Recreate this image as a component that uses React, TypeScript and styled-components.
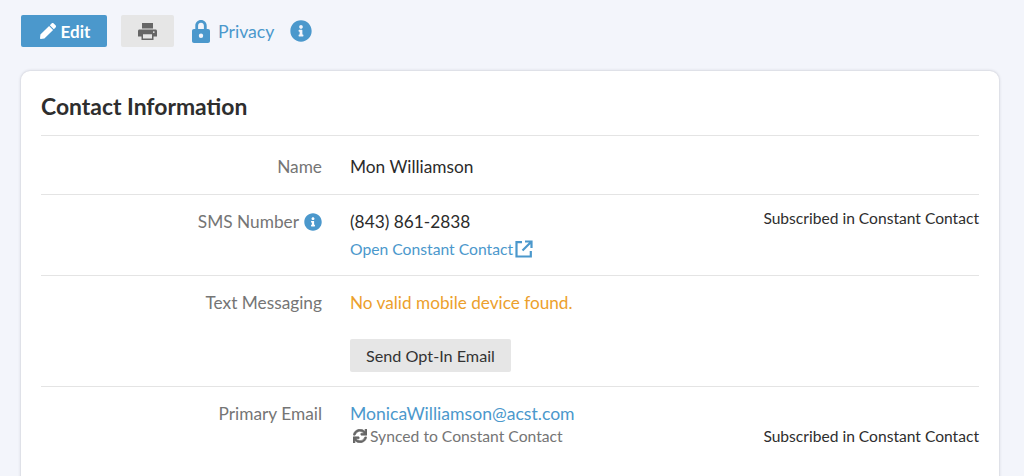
import React from "react";
import styled, { createGlobalStyle } from "styled-components";
import { FaPen, FaInfoCircle, FaSync } from "react-icons/fa";

const Global = createGlobalStyle`
  html, body { margin: 0; padding: 0; height: 100%; overflow: hidden; background: #f3f5fb; }
  body { font-family: Lato, "Liberation Sans", sans-serif; color: #2b2b2b; }
`;

const Page = styled.div`
  padding: 15px 25px 0 21px;
  display: flex;
  flex-direction: column;
  gap: 24px;
`;
const Toolbar = styled.div`
  display: flex;
  align-items: center;
  height: 32px;
`;
const Button = styled.button<{ $primary?: boolean }>`
  display: inline-flex;
  align-items: center;
  justify-content: center;
  gap: 5px;
  height: 32px;
  padding: 0;
  border: 0;
  border-radius: 2px;
  font-family: inherit;
  font-size: 16px;
  font-weight: ${(p) => (p.$primary ? 700 : 400)};
  background: ${(p) => (p.$primary ? "#4b98cc" : "#e6e6e6")};
  color: ${(p) => (p.$primary ? "#fff" : "#333")};
`;
const EditButton = styled(Button)`
  width: 86px;
  margin-right: 14px;
  font-size: 17px;
  padding-left: 2px;
`;
const PrintButton = styled(Button)`
  width: 53px;
  margin-right: 18px;
  color: #666;
`;
const PrivacyLink = styled.a`
  display: inline-flex;
  align-items: center;
  gap: 8px;
  font-size: 17.7px;
  color: #4b98cc;
  margin-right: 16px;
`;
const InfoBig = styled(FaInfoCircle)`
  font-size: 22px;
  color: #4b98cc;
`;
const Card = styled.section`
  background: #fff;
  border-radius: 9px 9px 0 0;
  box-shadow: 0 0 3px rgba(60, 60, 80, 0.3);
  padding: 0 20px;
  height: 420px;
`;
const Title = styled.h2`
  margin: 0;
  height: 65px;
  box-sizing: border-box;
  border-bottom: 1.5px solid #e4e4e4;
  padding-top: 21px;
  font-size: 22.9px;
  line-height: 29px;
  font-weight: 700;
  color: #2e2e2e;
`;
const Row = styled.div<{ $h: number; $top: number }>`
  display: grid;
  grid-template-columns: 281px 1fr auto;
  column-gap: 28px;
  height: ${(p) => p.$h}px;
  box-sizing: border-box;
  border-bottom: 1.5px solid #e4e4e4;
  padding-top: ${(p) => p.$top}px;
  font-size: 17.3px;
  line-height: 22px;
`;
const Label = styled.div`
  display: flex;
  justify-content: flex-end;
  align-items: center;
  gap: 5px;
  height: 22px;
  color: #757575;
`;
const Info = styled(FaInfoCircle)`
  font-size: 18px;
  color: #4b98cc;
`;
const Value = styled.div`
  display: flex;
  flex-direction: column;
  align-items: flex-start;
`;
const SmallLink = styled.a`
  display: inline-flex;
  align-items: center;
  gap: 2px;
  margin-top: 5px;
  font-size: 15.7px;
  line-height: 22px;
  color: #4b98cc;
`;
const Warning = styled.div`
  font-size: 17.2px;
  color: #eca02c;
`;
const OptIn = styled(Button)`
  width: 161px;
  height: 33px;
  margin-top: 25px;
  font-size: 16.2px;
`;
const EmailLink = styled.a`
  font-size: 17.6px;
  color: #4b98cc;
`;
const Synced = styled.div`
  display: flex;
  align-items: center;
  gap: 3px;
  font-size: 15.7px;
  line-height: 22px;
  color: #757575;
  margin-left: 3px;
`;
const Status = styled.div<{ $low?: boolean }>`
  font-size: 15.6px;
  line-height: 20px;
  color: #2e2e2e;
  margin-top: ${(p) => (p.$low ? 23 : -3)}px;
`;

const LockIcon = () => (
  <svg width="18" height="23" viewBox="0 0 18 23" aria-hidden="true">
    <path
      fill="currentColor"
      fillRule="evenodd"
      d="M9 0c3.300 0 5.700 2.500 5.700 5.800V9H16c1.200 0 2 .8 2 2v10c0 1.200-.8 2-2 2H2c-1.200 0-2-.8-2-2V11c0-1.200.8-2 2-2h1.300V5.800C3.300 2.500 5.700 0 9 0zm0 2.800c-1.700 0-2.900 1.300-2.900 3V9h5.800V5.800c0-1.700-1.200-3-2.900-3zM9 13.600a2.200 2.200 0 1 0 0 4.400 2.200 2.200 0 0 0 0-4.400z"
    />
  </svg>
);

const PrintIcon = () => (
  <svg width="19" height="17" viewBox="0 0 19 17" aria-hidden="true">
    <path
      fill="currentColor"
      fillRule="evenodd"
      d="M4 0h11v5.500H4zM1.500 6.500h16c.9 0 1.500.6 1.500 1.500v5.500h-3.500V17h-12v-3.500H0V8c0-.9.600-1.500 1.500-1.500zM5 11.200V15.500h9v-4.300zM15.800 8.200a.9.900 0 1 0 0 1.800.9.900 0 0 0 0-1.800z"
    />
  </svg>
);

const ExternalIcon = () => (
  <svg width="18" height="18" viewBox="0 0 18 18" fill="none" stroke="currentColor" strokeWidth="2.2" aria-hidden="true">
    <path d="M7 2.200H1.500v14.300h14.300V11" />
    <path d="M10 1.500h6.500V8M16 2L7.500 10.500" />
  </svg>
);

const SyncIcon = styled(FaSync)`
  font-size: 14px;
  color: #666;
  stroke: currentColor;
  stroke-width: 24px;
`;

export default function App() {
  return (
    <Page>
      <Global />
      <Toolbar>
        <EditButton $primary>
          <FaPen size={16} />
          Edit
        </EditButton>
        <PrintButton>
          <PrintIcon />
        </PrintButton>
        <PrivacyLink>
          <LockIcon />
          Privacy
        </PrivacyLink>
        <InfoBig />
      </Toolbar>
      <Card>
        <Title>Contact Information</Title>
        <Row $h={59} $top={20}>
          <Label>Name</Label>
          <Value>Mon Williamson</Value>
        </Row>
        <Row $h={81} $top={16}>
          <Label>
            SMS Number <Info />
          </Label>
          <Value>
            (843) 861-2838
            <SmallLink>
              Open Constant Contact
              <ExternalIcon />
            </SmallLink>
          </Value>
          <Status>Subscribed in Constant Contact</Status>
        </Row>
        <Row $h={111} $top={16}>
          <Label>Text Messaging</Label>
          <Value>
            <Warning>No valid mobile device found.</Warning>
            <OptIn>Send Opt-In Email</OptIn>
          </Value>
        </Row>
        <Row $h={100} $top={16}>
          <Label>Primary Email</Label>
          <Value>
            <EmailLink>MonicaWilliamson@acst.com</EmailLink>
            <Synced>
              <SyncIcon />
              Synced to Constant Contact
            </Synced>
          </Value>
          <Status $low>Subscribed in Constant Contact</Status>
        </Row>
      </Card>
    </Page>
  );
}
